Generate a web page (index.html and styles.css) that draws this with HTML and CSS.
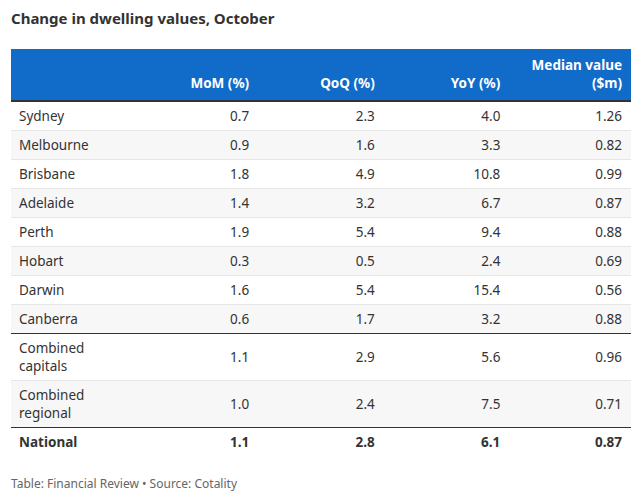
FILE: index.html
```html
<!DOCTYPE html>
<html lang="en">
<head>
<meta charset="utf-8">
<title>Change in dwelling values, October</title>
<link rel="stylesheet" href="styles.css">
</head>
<body>
<div class="chart">
  <h1 class="title">Change in dwelling values, October</h1>
  <table class="data">
    <thead>
      <tr>
        <th class="c-name"></th>
        <th class="num">MoM (%)</th>
        <th class="num">QoQ (%)</th>
        <th class="num">YoY (%)</th>
        <th class="num last">Median value<br>($m)</th>
      </tr>
    </thead>
    <tbody>
      <tr><td>Sydney</td><td class="num">0.7</td><td class="num">2.3</td><td class="num">4.0</td><td class="num last">1.26</td></tr>
      <tr class="alt"><td>Melbourne</td><td class="num">0.9</td><td class="num">1.6</td><td class="num">3.3</td><td class="num last">0.82</td></tr>
      <tr><td>Brisbane</td><td class="num">1.8</td><td class="num">4.9</td><td class="num">10.8</td><td class="num last">0.99</td></tr>
      <tr class="alt"><td>Adelaide</td><td class="num">1.4</td><td class="num">3.2</td><td class="num">6.7</td><td class="num last">0.87</td></tr>
      <tr><td>Perth</td><td class="num">1.9</td><td class="num">5.4</td><td class="num">9.4</td><td class="num last">0.88</td></tr>
      <tr class="alt"><td>Hobart</td><td class="num">0.3</td><td class="num">0.5</td><td class="num">2.4</td><td class="num last">0.69</td></tr>
      <tr><td>Darwin</td><td class="num">1.6</td><td class="num">5.4</td><td class="num">15.4</td><td class="num last">0.56</td></tr>
      <tr class="alt sep"><td>Canberra</td><td class="num">0.6</td><td class="num">1.7</td><td class="num">3.2</td><td class="num last">0.88</td></tr>
      <tr class="tall"><td>Combined<br>capitals</td><td class="num">1.1</td><td class="num">2.9</td><td class="num">5.6</td><td class="num last">0.96</td></tr>
      <tr class="alt tall sep"><td>Combined<br>regional</td><td class="num">1.0</td><td class="num">2.4</td><td class="num">7.5</td><td class="num last">0.71</td></tr>
      <tr class="total"><td>National</td><td class="num">1.1</td><td class="num">2.8</td><td class="num">6.1</td><td class="num last">0.87</td></tr>
    </tbody>
  </table>
  <p class="notes">Table: Financial Review • Source: Cotality</p>
</div>
</body>
</html>
```

FILE: styles.css
```css
html, body {
  margin: 0;
  padding: 0;
  background: #ffffff;
}

body {
  font-family: "Noto Sans", "Open Sans", sans-serif;
  color: #333333;
}

.chart {
  padding: 8px 6px 0 11px;
}

.title {
  margin: 0 0 21px 0;
  font-size: 15px;
  line-height: 20px;
  font-weight: 700;
  color: #333333;
}

.data {
  width: 620px;
  border-collapse: collapse;
  font-size: 13.5px;
}

.data th {
  background: #116bc9;
  color: #ffffff;
  font-weight: 700;
  height: 52px;
  vertical-align: bottom;
  line-height: 18px;
  padding: 0 9px 8px 8px;
  border-bottom: 2px solid #333333;
  box-sizing: border-box;
}

.data th.c-name {
  width: 121px;
}

.data th.num {
  width: 125px;
}

.data th.last {
  width: 121px;
}

.data td {
  height: 28px;
  padding: 0 9px 0 8px;
  line-height: 18px;
  border-bottom: 1px solid #e6e6e6;
  vertical-align: middle;
}

.data tr.alt td {
  background: #f7f7f7;
}

.data .num {
  text-align: right;
}

.data tr.sep td {
  border-bottom: 1.5px solid #333333;
}

.data tr.tall td {
  height: 46px;
}

.data tr.total td {
  font-weight: 700;
  border-bottom: none;
  height: 27px;
}

.notes {
  margin: 21px 0 0 0;
  font-size: 12px;
  line-height: 16px;
  color: #666666;
}
```
